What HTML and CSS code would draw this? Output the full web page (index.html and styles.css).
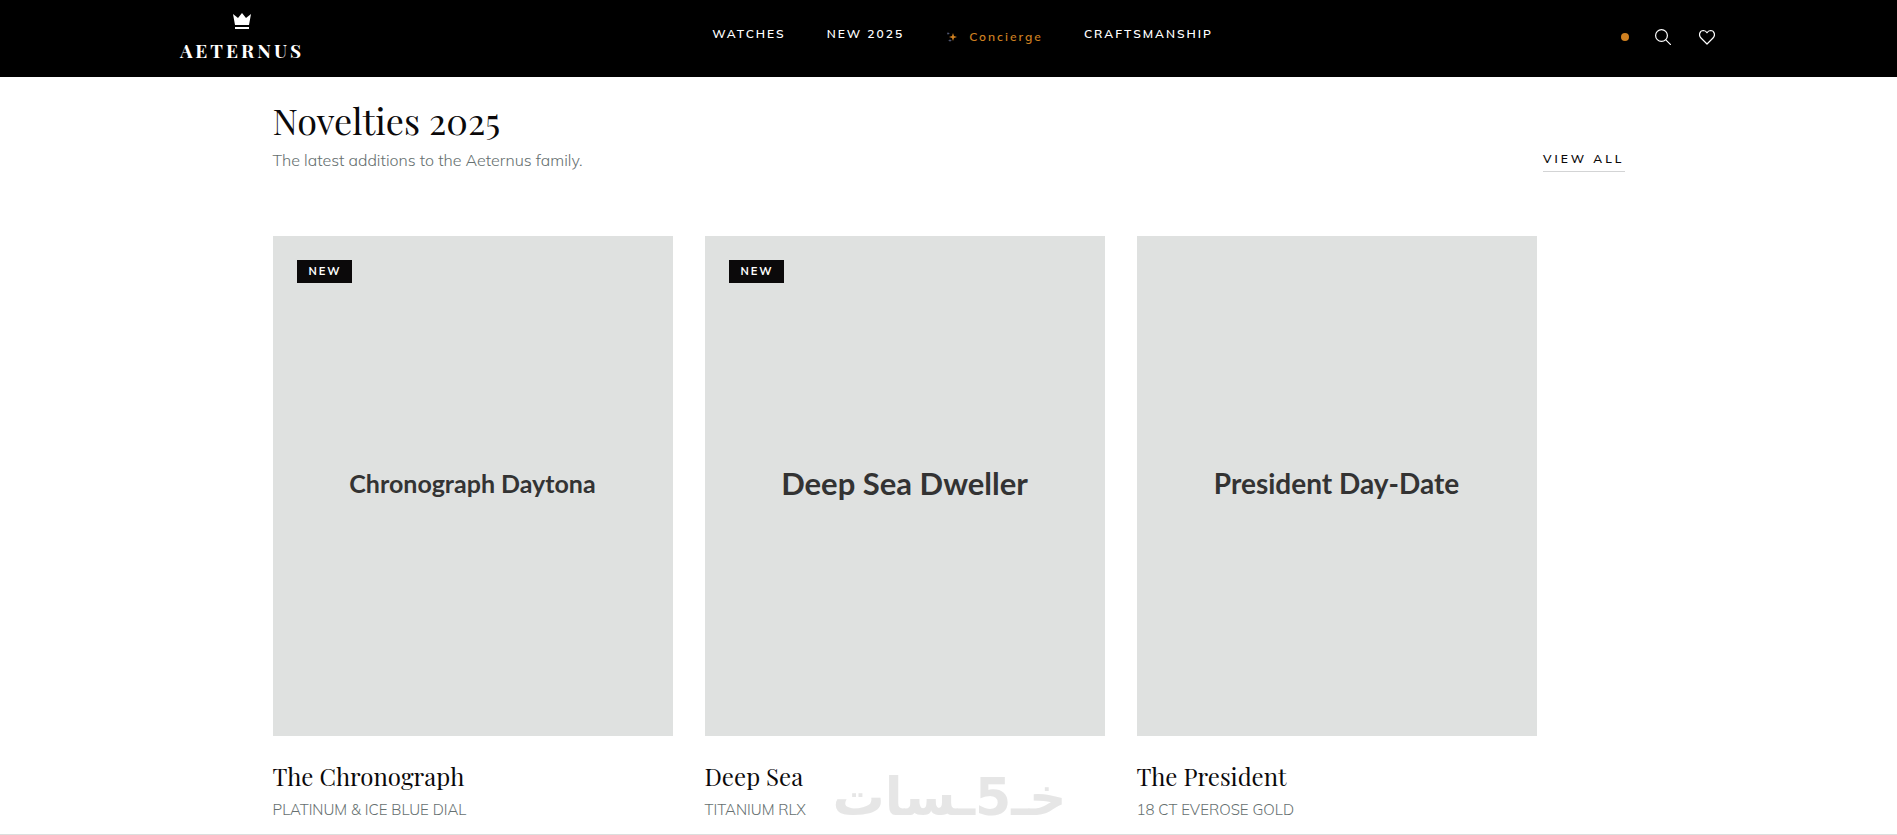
FILE: index.html
```html
<!DOCTYPE html>
<html lang="en">
<head>
<meta charset="utf-8">
<meta name="viewport" content="width=device-width, initial-scale=1">
<title>Aeternus</title>
<link rel="stylesheet" href="styles.css">
</head>
<body>
<header class="header">
  <a class="brand" href="#">
    <svg class="brand-crown" viewBox="0 0 18 16" aria-hidden="true"><path d="M2 12 0 1l5 4 4-5 4 5 5-4-2 11zM2 14h14v2H2z"/></svg>
    <span class="brand-name">AETERNUS</span>
  </a>
  <nav class="nav">
    <a href="#">WATCHES</a>
    <a href="#">NEW 2025</a>
    <a class="concierge" href="#">
      <svg class="spark" viewBox="0 0 10 10" aria-hidden="true"><path class="spark-main" d="M6 1 7 4l3 1-3 1-1 3-1-3-3-1 3-1z"/><path class="spark-small" d="M1 0l.5 1L3 1.500l-1.500.5L1 3l-.5-1L0 1.500 .5 1zM3 7l.5 1L5 8.500 3.500 9 3 10l-.5-1L1 8.500 2.500 8z"/></svg>
      <span>Concierge</span>
    </a>
    <a href="#">CRAFTSMANSHIP</a>
  </nav>
  <div class="actions">
    <span class="dot"></span>
    <button class="icon-button" type="button" aria-label="Search"><svg viewBox="0 0 16 16"><circle cx="6.500" cy="6.500" r="5.900"/><path d="m10.800 10.800 4.800 4.800"/></svg></button>
    <button class="icon-button" type="button" aria-label="Wishlist"><svg viewBox="0 0 16 16"><path d="M8 15 2 9C-.6 6.300.5 1.600 4.500 1.500 6.300 1.500 7.300 2.600 8 3.800 8.700 2.600 9.700 1.500 11.500 1.500 15.500 1.600 16.600 6.300 14 9z"/></svg></button>
  </div>
</header>
<main class="main">
  <div class="heading">
    <div>
      <h1 class="title">Novelties 2025</h1>
      <p class="lead">The latest additions to the Aeternus family.</p>
    </div>
    <a class="view-all" href="#">VIEW ALL</a>
  </div>
  <section class="cards">
    <article class="card">
      <div class="photo photo-small"><span class="badge">NEW</span>Chronograph Daytona</div>
      <h2 class="name">The Chronograph</h2>
      <p class="detail">PLATINUM &amp; ICE BLUE DIAL</p>
    </article>
    <article class="card">
      <div class="photo photo-large"><span class="badge">NEW</span>Deep Sea Dweller</div>
      <h2 class="name">Deep Sea</h2>
      <p class="detail">TITANIUM RLX</p>
      <span class="watermark" lang="ar" dir="rtl">خـ5ـسات</span>
    </article>
    <article class="card">
      <div class="photo photo-medium">President Day-Date</div>
      <h2 class="name">The President</h2>
      <p class="detail">18 CT EVEROSE GOLD</p>
    </article>
  </section>
</main>
<hr class="divider">
</body>
</html>
```
FILE: styles.css
```css
* { box-sizing: border-box; }
body {
  margin: 0;
  background: #fff;
  color: #0b090a;
  font-family: Mulish, Muli, Nunito, Lato, sans-serif;
}
h1, h2, p { margin: 0; font-weight: 400; }
a { color: inherit; text-decoration: none; }
.header {
  display: flex;
  justify-content: space-between;
  align-items: flex-start;
  padding: 0 182px 0 180px;
  height: 77px;
  background: #000;
  color: #fff;
}
.brand {
  display: flex;
  flex-direction: column;
  align-items: center;
  padding-top: 13px;
}
.brand-crown { width: 18px; height: 16px; fill: #fff; }
.brand-name {
  margin-top: 11px;
  font: 700 19px/20px "Playfair Display", "Liberation Serif", serif;
  letter-spacing: 3px;
}
.nav {
  display: flex;
  gap: 41px;
  padding-top: 26px;
  font-size: 12px;
  font-weight: 600;
  line-height: 16px;
  letter-spacing: 2px;
}
.concierge {
  display: flex;
  align-items: center;
  gap: 12px;
  padding: 3px 0 0 2px;
  color: #cf8020;
}
.spark { width: 10px; height: 10px; }
.spark-main { fill: #cf8020; }
.spark-small { fill: #555b78; }
.actions {
  display: flex;
  align-items: center;
  padding-top: 29px;
}
.dot { width: 8px; height: 8px; border-radius: 50%; background: #cf8020; }
.icon-button {
  margin-left: 26px;
  padding: 0;
  border: 0;
  background: none;
  line-height: 0;
}
.icon-button + .icon-button { margin-left: 28px; }
.icon-button svg {
  width: 16px;
  height: 16px;
  fill: none;
  stroke: #fff;
  stroke-width: 1.2;
  stroke-linecap: round;
  stroke-linejoin: round;
}
.main {
  max-width: 1352px;
  margin: 0 auto;
  padding: 21px 0 14px;
}
.heading { display: flex; justify-content: space-between; align-items: flex-end; }
.title { font: 400 36px/44px "Playfair Display", "Liberation Serif", serif; }
.lead {
  margin-top: 6px;
  color: #667070;
  font-size: 16px;
  font-weight: 300;
  line-height: 24px;
}
.view-all {
  border-bottom: 1px solid #d3d4d5;
  font-size: 12px;
  font-weight: 600;
  line-height: 24px;
  letter-spacing: 3px;
}
.cards {
  display: grid;
  grid-template-columns: repeat(3, 400px);
  gap: 32px;
  padding-top: 64px;
}
.card { position: relative; }
.photo {
  position: relative;
  display: flex;
  align-items: center;
  justify-content: center;
  aspect-ratio: 4 / 5;
  padding-bottom: 6px;
  background: #dfe1e0;
  color: #333;
  font-family: Lato, sans-serif;
  font-weight: 700;
}
.photo-small { font-size: 25px; }
.photo-medium { font-size: 28px; }
.photo-large { font-size: 31px; }
.badge {
  position: absolute;
  top: 24px;
  left: 24px;
  padding: 0 10px 0 12px;
  background: #0b090a;
  color: #fff;
  font-family: Mulish, Lato, sans-serif;
  font-size: 11px;
  line-height: 23px;
  letter-spacing: 2px;
}
.name {
  margin-top: 24px;
  font: 400 24px/32px "Playfair Display", "Liberation Serif", serif;
}
.detail {
  margin-top: 8px;
  color: #667070;
  font-size: 15px;
  font-weight: 300;
  line-height: 20px;
}
.watermark {
  position: absolute;
  left: 128px;
  bottom: -9px;
  color: #e6e6e6;
  font: 700 52px/64px "DejaVu Sans", sans-serif;
}
.divider { margin: 0; border: 0; border-top: 1px solid #dcdedd; }
```
